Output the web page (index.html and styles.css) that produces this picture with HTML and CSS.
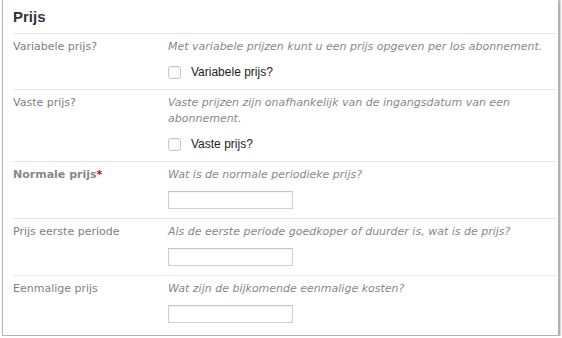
FILE: index.html
```html
<!DOCTYPE html>
<html lang="nl">
<head>
    <meta charset="UTF-8">
    <meta name="viewport" content="width=device-width, initial-scale=1.0">
    <title>Prijs</title>
    <link rel="stylesheet" href="styles.css">
</head>
<body>
<div class="panel">
    <h2 class="panel-title">Prijs</h2>

    <div class="field">
        <div class="field-label">Variabele prijs?</div>
        <div class="field-body">
            <div class="help">Met variabele prijzen kunt u een prijs opgeven per los abonnement.</div>
            <label class="check"><span class="box"></span>Variabele prijs?</label>
        </div>
    </div>

    <div class="field">
        <div class="field-label">Vaste prijs?</div>
        <div class="field-body">
            <div class="help">Vaste prijzen zijn onafhankelijk van de ingangsdatum van een abonnement.</div>
            <label class="check"><span class="box"></span>Vaste prijs?</label>
        </div>
    </div>

    <div class="field">
        <div class="field-label required">Normale prijs<span class="star">*</span></div>
        <div class="field-body">
            <div class="help">Wat is de normale periodieke prijs?</div>
            <input type="text" class="text-input">
        </div>
    </div>

    <div class="field">
        <div class="field-label">Prijs eerste periode</div>
        <div class="field-body">
            <div class="help">Als de eerste periode goedkoper of duurder is, wat is de prijs?</div>
            <input type="text" class="text-input">
        </div>
    </div>

    <div class="field last">
        <div class="field-label">Eenmalige prijs</div>
        <div class="field-body">
            <div class="help">Wat zijn de bijkomende eenmalige kosten?</div>
            <input type="text" class="text-input">
        </div>
    </div>
</div>
</body>
</html>
```

FILE: styles.css
```css
body{
    margin: 0;
    background: #fff;
    font-family: "DejaVu Sans", Verdana, sans-serif;
}
.panel{
    margin: -1px 0 0 2px;
    padding: 0 2px 0 10px;
    box-sizing: border-box;
    width: 557px;
    border: 1px solid #b4b4b4;
    box-shadow: 1px 1px 2px rgba(0, 0, 0, 0.45);
    background: #fff;
}
.panel-title{
    margin: 0;
    height: 34px;
    box-sizing: border-box;
    padding-top: 8px;
    font-family: "Liberation Sans", Arial, sans-serif;
    font-size: 15px;
    font-weight: bold;
    color: #333;
    line-height: 18px;
    border-bottom: 1px solid #e6e6e6;
}
.field{
    display: flex;
    padding: 5px 0 9px;
    border-bottom: 1px solid #e6e6e6;
}
.field.last{
    padding-bottom: 12px;
    border-bottom: none;
}
.field-label{
    width: 155px;
    flex: none;
    font-size: 11px;
    line-height: 16px;
    color: #808080;
}
.field-label.required{
    font-weight: bold;
    color: #888;
}
.star{
    color: #d60000;
}
.field-body{
    flex: 1;
}
.help{
    font-size: 11px;
    line-height: 16px;
    font-style: italic;
    color: #888;
}
.check{
    display: flex;
    align-items: center;
    margin-top: 9px;
    height: 16px;
    font-family: "Liberation Sans", Arial, sans-serif;
    font-size: 12px;
    color: #222;
}
.box{
    width: 11px;
    height: 11px;
    margin-right: 10px;
    border: 1px solid #c4c4c4;
    border-radius: 3px;
    box-shadow: inset 0 1px 1px rgba(0, 0, 0, 0.06);
}
.text-input{
    display: block;
    margin: 8px 0 0;
    width: 125px;
    height: 18px;
    box-sizing: border-box;
    padding: 0 3px;
    border: 1px solid #d0d0d0;
    border-top-color: #c4c4c4;
    box-shadow: inset 0 1px 1px rgba(0, 0, 0, 0.05);
    font-size: 11px;
}
```
